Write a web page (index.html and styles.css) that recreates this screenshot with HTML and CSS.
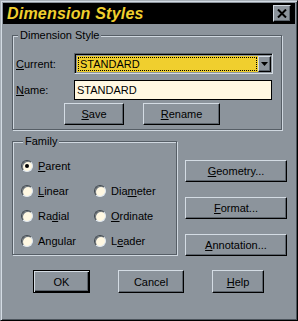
FILE: index.html
```html
<!DOCTYPE html>
<html>
<head>
<meta charset="utf-8">
<link rel="stylesheet" href="styles.css">
</head>
<body>
<div class="window">
  <div class="titlebar">
    <span class="title">Dimension Styles</span>
    <span class="close"><svg width="10" height="9" viewBox="0 0 10 9"><path d="M1 0.5 L9 8.5 M9 0.5 L1 8.5" stroke="#000" stroke-width="2" fill="none"/></svg></span>
  </div>
  <div class="content">
    <div class="group group-style">
      <div class="legend">Dimension Style</div>
      <div class="row row-current">
        <span class="lbl"><u>C</u>urrent:</span>
        <div class="combo">
          <div class="combo-field"><span class="focus">STANDARD</span></div>
          <span class="drop"><svg width="7" height="5" viewBox="0 0 7 5"><path d="M0 0 H7 L3.5 4 Z" fill="#000"/></svg></span>
        </div>
      </div>
      <div class="row row-name">
        <span class="lbl"><u>N</u>ame:</span>
        <div class="edit">STANDARD</div>
      </div>
      <div class="row row-buttons">
        <span class="btn btn-save"><u>S</u>ave</span>
        <span class="btn btn-rename"><u>R</u>ename</span>
      </div>
    </div>
    <div class="middle">
      <div class="group group-family">
        <div class="legend">Family</div>
        <div class="radios">
          <span class="radio"><i class="dot checked"></i><span><u>P</u>arent</span></span>
          <span class="radio"></span>
          <span class="radio"><i class="dot"></i><span><u>L</u>inear</span></span>
          <span class="radio"><i class="dot"></i><span>Dia<u>m</u>eter</span></span>
          <span class="radio"><i class="dot"></i><span>Ra<u>d</u>ial</span></span>
          <span class="radio"><i class="dot"></i><span><u>O</u>rdinate</span></span>
          <span class="radio"><i class="dot"></i><span>An<u>g</u>ular</span></span>
          <span class="radio"><i class="dot"></i><span>L<u>e</u>ader</span></span>
        </div>
      </div>
      <div class="side">
        <span class="btn btn-side"><u>G</u>eometry...</span>
        <span class="btn btn-side"><u>F</u>ormat...</span>
        <span class="btn btn-side"><u>A</u>nnotation...</span>
      </div>
    </div>
    <div class="bottom">
      <span class="btn btn-default btn-ok">OK</span>
      <span class="btn btn-cancel">Cancel</span>
      <span class="btn btn-help"><u>H</u>elp</span>
    </div>
  </div>
</div>
</body>
</html>
```
FILE: styles.css
```css
html, body {
  margin: 0;
  padding: 0;
  background: #8c949c;
}
body {
  font-family: "Liberation Sans", Arial, sans-serif;
  font-size: 11px;
  color: #000;
}
u {
  text-decoration: underline;
  text-underline-offset: 1px;
}
.window {
  width: 298px;
  height: 321px;
  box-sizing: border-box;
  background: #8c949c;
  border: 1px solid;
  border-color: #a8b0b8 #000 #000 #a8b0b8;
  box-shadow: inset 1px 1px 0 #d4dce4, inset -1px -1px 0 #4c545c;
  padding: 2px;
}
.titlebar {
  height: 21px;
  background: #000;
  display: flex;
  align-items: center;
  justify-content: space-between;
  padding: 0 4px 0 4px;
}
.title {
  color: #f0cf2e;
  font-weight: bold;
  font-style: italic;
  font-size: 16px;
  letter-spacing: 0.2px;
}
.close {
  width: 18px;
  height: 17px;
  box-sizing: border-box;
  background: #8c949c;
  border: 1px solid;
  border-color: #d4dce4 #000 #000 #d4dce4;
  box-shadow: inset -1px -1px 0 #5c646c;
  display: flex;
  align-items: center;
  justify-content: center;
}
.content {
  padding: 0 13px 0 9px;
}
.group {
  box-sizing: border-box;
  border: 1px solid #565e66;
  box-shadow: inset 1px 1px 0 #d0d8e0, 1px 1px 0 #d0d8e0;
  padding-left: 3px;
}
.group-style {
  margin-top: 11px;
  height: 95px;
}
.legend {
  display: table;
  margin: -7px 0 0 2px;
  padding: 0 2px;
  line-height: 13px;
  background: #8c949c;
}
.row {
  display: flex;
  align-items: center;
}
.lbl {
  width: 58px;
}
.row-current {
  margin-top: 11px;
  height: 21px;
}
.combo {
  width: 199px;
  height: 21px;
  box-sizing: border-box;
  border: 1px solid;
  border-color: #5c646c #d4dce4 #d4dce4 #5c646c;
  box-shadow: inset 1px 1px 0 #000;
  padding: 2px 1px 1px 2px;
  display: flex;
}
.combo-field {
  flex: 1;
  background: #f0cf2e;
  padding: 1px;
  display: flex;
}
.focus {
  flex: 1;
  outline: 1px dotted #000;
  outline-offset: -1px;
  padding-left: 2px;
  line-height: 15px;
}
.drop {
  width: 13px;
  box-sizing: border-box;
  background: #8c949c;
  border: 1px solid;
  border-color: #d4dce4 #000 #000 #d4dce4;
  box-shadow: inset -1px -1px 0 #5c646c;
  display: flex;
  align-items: center;
  justify-content: center;
}
.row-name {
  margin-top: 6px;
  height: 20px;
}
.edit {
  width: 198px;
  height: 20px;
  box-sizing: border-box;
  border: 1px solid #000;
  background: #fff8e2;
  padding-left: 2px;
  line-height: 18px;
}
.row-buttons {
  margin-top: 3px;
  padding-left: 48px;
  gap: 19px;
}
.btn {
  display: flex;
  align-items: center;
  justify-content: center;
  box-sizing: border-box;
  height: 22px;
  border: 1px solid;
  border-color: #d4dce4 #000 #000 #d4dce4;
  box-shadow: inset -1px -1px 0 #5c646c;
  background: #8c949c;
  flex-shrink: 0;
}
.btn-save { width: 60px; }
.btn-rename { width: 77px; }
.middle {
  display: flex;
  margin-top: 11px;
}
.group-family {
  width: 165px;
  height: 114px;
  padding-left: 8px;
  flex-shrink: 0;
}
.radios {
  margin-top: 5px;
  display: grid;
  grid-template-columns: 73px auto;
  grid-auto-rows: 25px;
}
.radio {
  display: flex;
  align-items: center;
  gap: 5px;
}
.dot {
  width: 12px;
  height: 12px;
  box-sizing: border-box;
  border-radius: 50%;
  border: 1px solid;
  border-color: #3c444c #e0e8f0 #e0e8f0 #3c444c;
  background: #fff8e2;
  box-shadow: inset 1px 1px 0 #6c747c;
  display: flex;
  align-items: center;
  justify-content: center;
}
.dot.checked::after {
  content: "";
  width: 4px;
  height: 4px;
  border-radius: 50%;
  background: #000;
}
.side {
  margin-left: 8px;
  padding-top: 19px;
  display: flex;
  flex-direction: column;
  gap: 15px;
  flex-shrink: 0;
}
.btn-side { width: 102px; }
.bottom {
  display: flex;
  margin-top: 14px;
  padding-left: 21px;
  gap: 28px;
}
.btn-default {
  border: 1px solid #000;
  box-shadow: inset 1px 1px 0 #d4dce4, inset -1px -1px 0 #000, inset -2px -2px 0 #5c646c;
}
.btn-ok { width: 57px; height: 23px; }
.btn-cancel { width: 66px; height: 23px; }
.btn-help { width: 52px; height: 23px; }
```
